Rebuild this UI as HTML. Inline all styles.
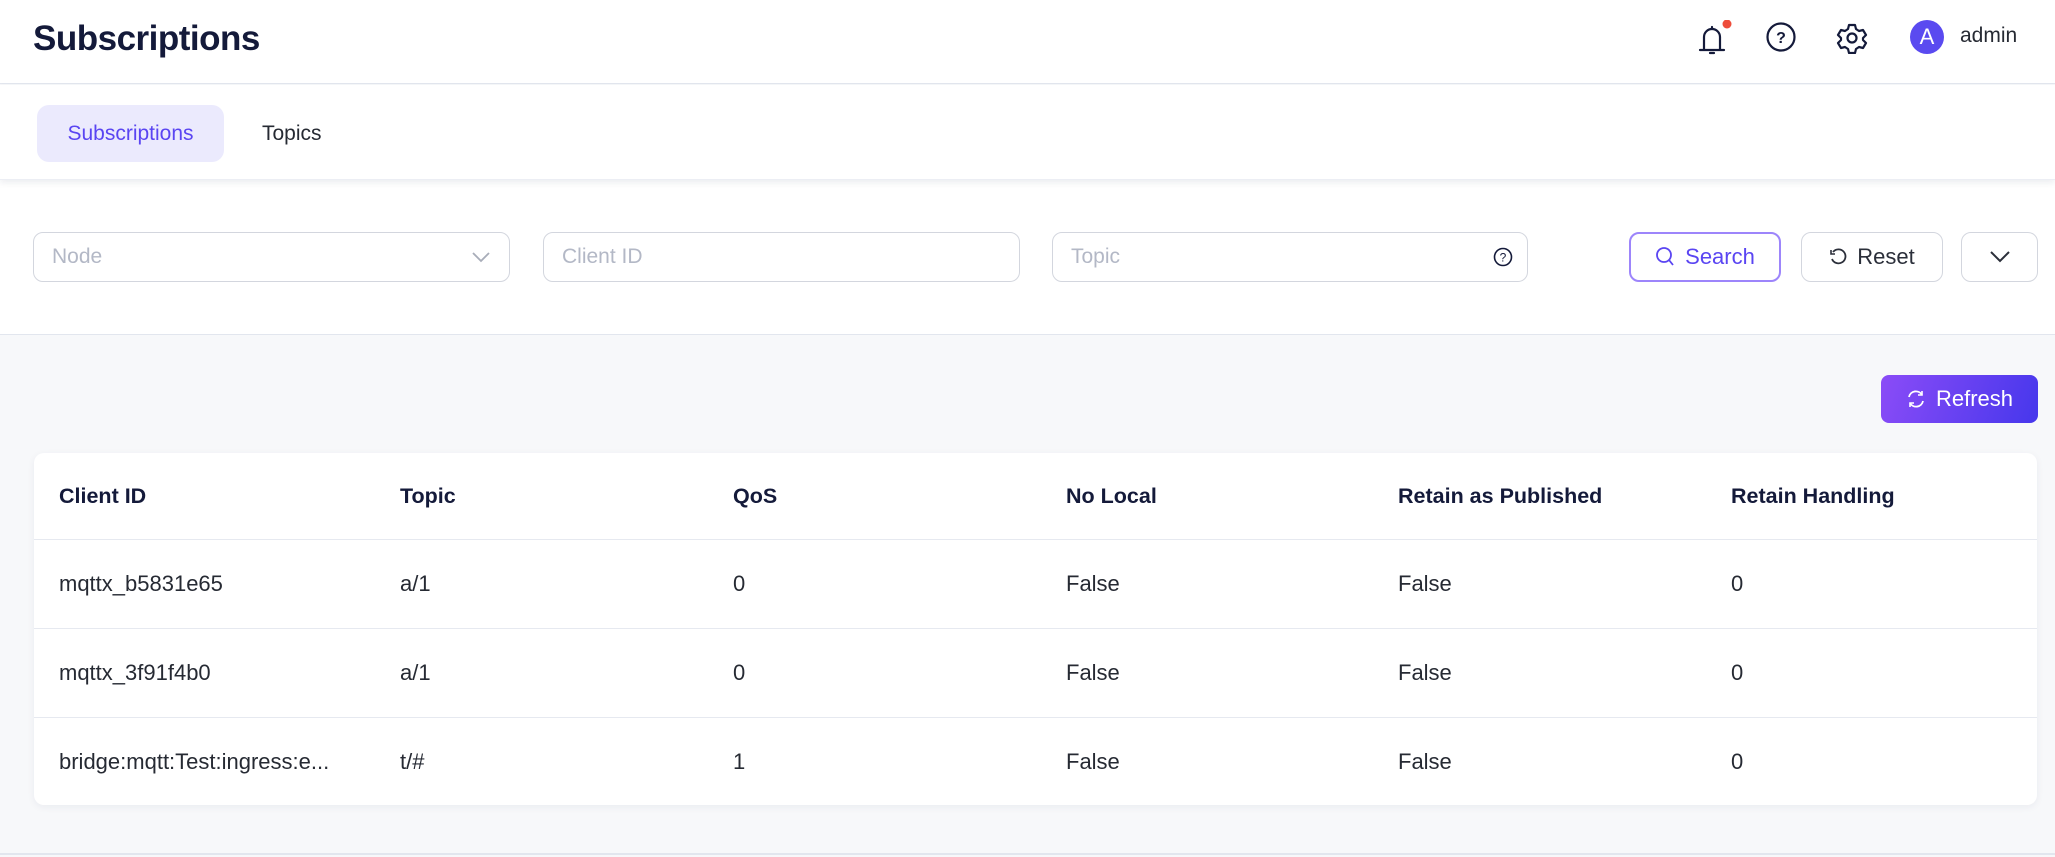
<!DOCTYPE html>
<html><head><meta charset="utf-8"><style>
*{box-sizing:border-box;margin:0;padding:0}
body{width:2055px;height:857px;overflow:hidden;background:#f7f8fa;font-family:"Liberation Sans",sans-serif;position:relative;color:#1f2937}
.abs{position:absolute}
#hdr{left:0;top:0;width:2055px;height:84px;background:#fff;border-bottom:1px solid #e2e6ee}
#title{left:33px;top:19px;font-size:35px;font-weight:bold;color:#141a3a;letter-spacing:-0.5px}
#tabs{left:0;top:85px;width:2055px;height:95px;background:#fff;box-shadow:0 3px 6px rgba(30,40,80,.08);border-bottom:1px solid #eceef4;z-index:2}
.tab{position:absolute;top:20px;height:57px;line-height:57px;font-size:21px;border-radius:12px}
#filt{left:0;top:180px;width:2055px;height:155px;background:#fff;border-bottom:1px solid #e2e6ee}
.inp{position:absolute;top:52px;height:50px;border:1.5px solid #d3d6de;border-radius:10px;font-size:21px;color:#b3b8c6;padding-left:18px;line-height:47px}
.btn{position:absolute;top:52px;height:50px;border:1.5px solid #d3d6de;border-radius:10px;font-size:22px;color:#2b2f3a;display:flex;align-items:center;justify-content:center;gap:10px;background:#fff}
#refresh{left:1881px;top:375px;width:157px;height:48px;border-radius:8px;background:linear-gradient(110deg,#8b4cf7,#4637ec);color:#fff;font-size:22px;display:flex;align-items:center;justify-content:center;gap:10px}
#card{left:34px;top:453px;width:2003px;height:352px;background:#fff;border-radius:10px;box-shadow:0 2px 8px rgba(30,40,80,.06)}
.row{position:absolute;left:0;width:2003px;border-bottom:1.5px solid #e6e9f0}
.c{position:absolute;font-size:22px;color:#262a33}
.h .c{font-weight:bold;color:#141a3a;font-size:21.5px}
</style></head><body>
<div id="hdr" class="abs">
<div id="title" class="abs">Subscriptions</div>
<svg class="abs" style="left:1692px;top:20px" width="40" height="38" viewBox="0 0 40 38"><path d="M8 30h24M12 30V17a8 8 0 0 1 16 0v13M20 7v2M18 33h4" fill="none" stroke="#141a3a" stroke-width="2.2" stroke-linecap="round"/><circle cx="35" cy="4" r="4.5" fill="#ee4d3b"/></svg>
<svg class="abs" style="left:1766px;top:22px" width="30" height="30" viewBox="0 0 30 30"><circle cx="15" cy="15" r="13.5" fill="none" stroke="#141a3a" stroke-width="2.2"/><text x="15" y="21" font-size="16" font-weight="bold" text-anchor="middle" fill="#141a3a" font-family="Liberation Sans">?</text></svg>
<svg class="abs" style="left:1836px;top:22px" width="32" height="32" viewBox="0 0 32 32"><path d="M13 3h6l1 4 3 2 4-1 3 5-3 3v2l3 3-3 5-4-1-3 2-1 4h-6l-1-4-3-2-4 1-3-5 3-3v-2l-3-3 3-5 4 1 3-2z" fill="none" stroke="#141a3a" stroke-width="2.2" stroke-linejoin="round"/><circle cx="16" cy="16" r="4.5" fill="none" stroke="#141a3a" stroke-width="2.2"/></svg>
<div class="abs" style="left:1910px;top:20px;width:34px;height:34px;border-radius:50%;background:#5a4af0;color:#fff;font-size:22px;text-align:center;line-height:34px">A</div>
<div class="abs" style="left:1960px;top:24px;font-size:21px;color:#262a33">admin</div>
</div>
<div id="tabs" class="abs">
<div class="tab" style="left:37px;width:187px;background:#ebeafd;color:#5a45f2;text-align:center">Subscriptions</div>
<div class="tab" style="left:262px;color:#262a33">Topics</div>
</div>
<div id="filt" class="abs">
<div class="inp" style="left:33px;width:477px">Node<svg style="position:absolute;right:18px;top:18px" width="20" height="12"><path d="M2 2l8 8 8-8" fill="none" stroke="#a8adb9" stroke-width="1.8"/></svg></div>
<div class="inp" style="left:543px;width:477px">Client ID</div>
<div class="inp" style="left:1052px;width:476px">Topic<svg style="position:absolute;right:14px;top:14px" width="20" height="20"><circle cx="10" cy="10" r="8.5" fill="none" stroke="#141a3a" stroke-width="1.6"/><text x="10" y="14.5" font-size="12" text-anchor="middle" fill="#141a3a" font-family="Liberation Sans">?</text></svg></div>
<div class="btn" style="left:1629px;width:152px;border:2px solid #9d85fb;color:#5a45f2"><svg width="20" height="22"><circle cx="9" cy="9" r="7" fill="none" stroke="#5a45f2" stroke-width="1.8"/><path d="M14 14l4 5" stroke="#5a45f2" stroke-width="1.8"/></svg>Search</div>
<div class="btn" style="left:1801px;width:142px"><svg width="18" height="18"><path d="M4 4A7 7 0 1 1 3 11" fill="none" stroke="#2b2f3a" stroke-width="1.8"/><path d="M2 2v4h4" fill="none" stroke="#2b2f3a" stroke-width="1.6"/></svg>Reset</div>
<div class="btn" style="left:1961px;width:77px"><svg width="22" height="14"><path d="M2 2l9 9 9-9" fill="none" stroke="#2b2f3a" stroke-width="2"/></svg></div>
</div>
<div id="refresh" class="abs"><svg width="20" height="20"><path d="M16 6A7 7 0 0 0 3 8M4 14a7 7 0 0 0 13-2" fill="none" stroke="#fff" stroke-width="1.8"/><path d="M16 2v4h-4M4 18v-4h4" fill="none" stroke="#fff" stroke-width="1.6"/></svg>Refresh</div>
<div id="card" class="abs">
<div class="row h" style="top:0;height:87px"><div class="c" style="left:25px;top:31px">Client ID</div><div class="c" style="left:366px;top:31px">Topic</div><div class="c" style="left:699px;top:31px">QoS</div><div class="c" style="left:1032px;top:31px">No Local</div><div class="c" style="left:1364px;top:31px">Retain as Published</div><div class="c" style="left:1697px;top:31px">Retain Handling</div></div>
<div class="row" style="top:87px;height:89px"><div class="c" style="left:25px;top:31px">mqttx_b5831e65</div><div class="c" style="left:366px;top:31px">a/1</div><div class="c" style="left:699px;top:31px">0</div><div class="c" style="left:1032px;top:31px">False</div><div class="c" style="left:1364px;top:31px">False</div><div class="c" style="left:1697px;top:31px">0</div></div>
<div class="row" style="top:176px;height:89px"><div class="c" style="left:25px;top:31px">mqttx_3f91f4b0</div><div class="c" style="left:366px;top:31px">a/1</div><div class="c" style="left:699px;top:31px">0</div><div class="c" style="left:1032px;top:31px">False</div><div class="c" style="left:1364px;top:31px">False</div><div class="c" style="left:1697px;top:31px">0</div></div>
<div class="row" style="top:265px;height:87px;border:none"><div class="c" style="left:25px;top:31px">bridge:mqtt:Test:ingress:e...</div><div class="c" style="left:366px;top:31px">t/#</div><div class="c" style="left:699px;top:31px">1</div><div class="c" style="left:1032px;top:31px">False</div><div class="c" style="left:1364px;top:31px">False</div><div class="c" style="left:1697px;top:31px">0</div></div>
</div>
<div class="abs" style="left:0;top:853px;width:2055px;height:1.5px;background:#e2e6ee"></div>
</body></html>
